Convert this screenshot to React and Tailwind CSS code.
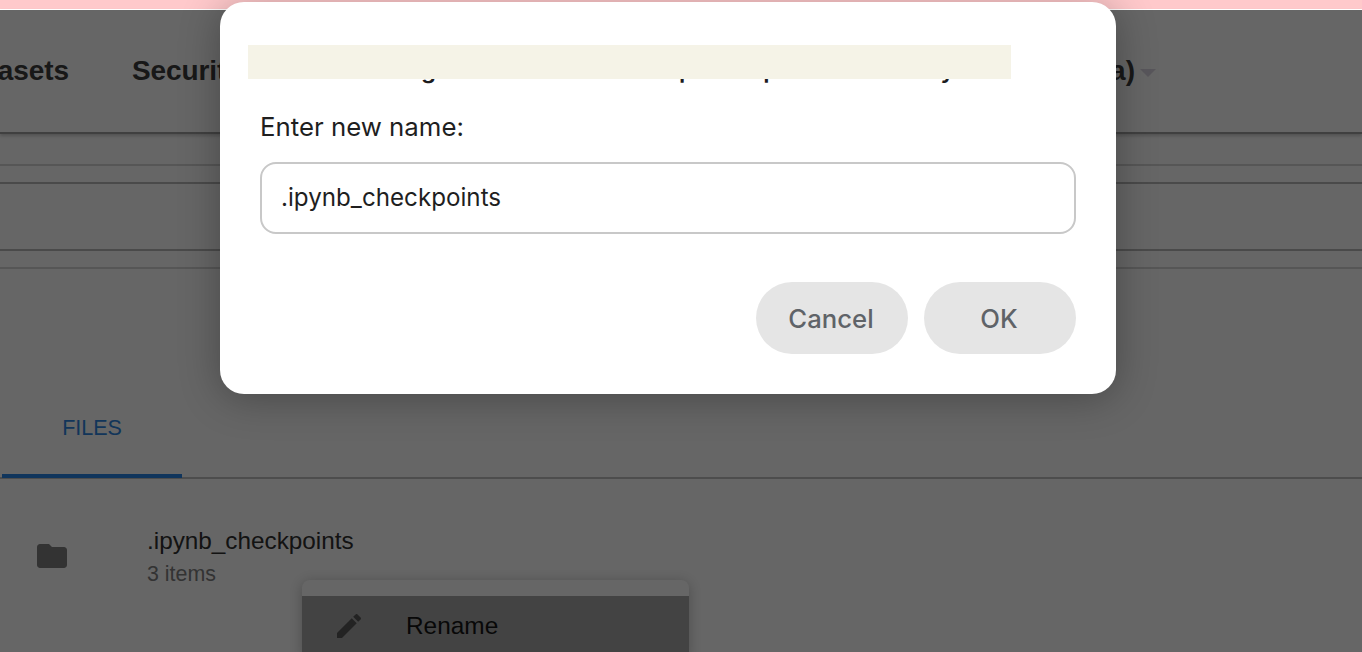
export default function App() {
  return (
    <div className="relative h-[652px] w-full overflow-hidden bg-white font-['Liberation_Sans',Arial,sans-serif]">
      <div className="h-[9px] bg-[#ffc9cb]" />
      <div className="flex h-[125px] items-center justify-between border-b-2 border-[#a0a0a0] pt-[1px] shadow-[0_2px_3px_rgba(0,0,0,0.2)]">
        <nav className="ml-[-47px] flex items-center gap-[60px] text-[28px] font-bold tracking-[-0.1px] text-[#3c3c3c]">
          <span className="mr-[3px]">Datasets</span>
          <span>Security</span>
        </nav>
        <div className="mr-[206px] flex items-center gap-[5px] text-[28px] font-bold text-[#3c3c3c]">
          <span>(Beta)</span>
          <span className="mt-[3px] h-0 w-0 border-x-[8px] border-t-[8px] border-x-transparent border-t-[#dcd6e4]" />
        </div>
      </div>
      <div className="h-[32px] border-b-2 border-[#d8d8d8]" />
      <div className="h-[18px] border-b-2 border-[#b8b8b8]" />
      <div className="h-[67px] border-b-2 border-[#b8b8b8]" />
      <div className="h-[18px] border-b-2 border-[#d8d8d8]" />
      <div className="flex h-[210px] items-end border-b-2 border-[#c0c0c0]">
        <div className="mb-[-1px] ml-[2px] flex h-[94px] w-[180px] items-start justify-center border-b-[4px] border-[#2a86e6] pt-[28px] text-[21.5px] text-[#2e86e0]">
          FILES
        </div>
      </div>
      <div className="flex items-start pt-[47px]">
        <svg className="ml-[34px] mt-[12px] h-9 w-9 fill-[#808080]" viewBox="0 0 24 24">
          <path d="M10 4H4c-1.1 0-1.99.9-1.99 2L2 18c0 1.1.9 2 2 2h16c1.1 0 2-.9 2-2V8c0-1.1-.9-2-2-2h-8l-2-2z" />
        </svg>
        <div className="ml-[77px]">
          <div className="text-[24.3px] leading-[30px] text-[#303030]">.ipynb_checkpoints</div>
          <div className="mt-[5px] text-[21.4px] leading-[26px] text-[#808080]">3 items</div>
        </div>
      </div>

      <div className="absolute left-[302px] top-[580px] w-[387px] rounded-t-lg bg-white pt-4 shadow-[0_2px_14px_rgba(0,0,0,0.25)]">
        <div className="flex h-[60px] items-center bg-[#a8a8a8] pl-[31px]">
          <svg className="h-8 w-8 fill-[#585858]" viewBox="0 0 24 24">
            <path d="M3 17.25V21h3.75L17.81 9.94l-3.75-3.75L3 17.25zM20.71 7.04c.39-.39.39-1.02 0-1.41l-2.34-2.34c-.39-.39-1.02-.39-1.41 0l-1.83 1.83 3.75 3.75 1.83-1.83z" />
          </svg>
          <span className="ml-[41px] text-[24.4px] text-[#141414]">Rename</span>
        </div>
      </div>

      <div className="absolute inset-x-0 bottom-0 top-[10px] bg-black/60" />

      <div className="absolute left-[220px] top-[1.5px] h-[392.5px] w-[896px] rounded-[24px] bg-white px-10 pt-[38px] font-['Inter',sans-serif] shadow-[0_4px_40px_rgba(0,0,0,0.3)]">
        <div className="relative h-[53px] whitespace-nowrap pt-[10px] text-[24px] font-semibold leading-[40px] text-[#1c1c1e]">
          Caution: change those name will stop this open kernels only
          <div className="absolute left-[-12px] top-[5px] h-[34px] w-[763px] bg-[#f5f3e7]" />
        </div>
        <label className="mt-[16px] block text-[25.8px] leading-[36px] text-[#1f1f1f]">Enter new name:</label>
        <input
          readOnly
          value=".ipynb_checkpoints"
          className="mt-[17px] block h-[72px] w-[816px] rounded-[16px] border-2 border-[#c8c8c8] bg-white px-[19px] text-[24.2px] text-[#1f1f1f] outline-none"
        />
        <div className="mt-[48px] flex justify-end gap-4">
          <button className="h-[72px] w-[152px] rounded-full bg-[#e5e5e5] pr-[2px] pt-[3px] text-[25.7px] font-medium text-[#5f6368]">Cancel</button>
          <button className="h-[72px] w-[152px] rounded-full bg-[#e5e5e5] pr-[2px] pt-[3px] text-[25.7px] font-medium text-[#5f6368]">OK</button>
        </div>
      </div>
    </div>
  );
}
